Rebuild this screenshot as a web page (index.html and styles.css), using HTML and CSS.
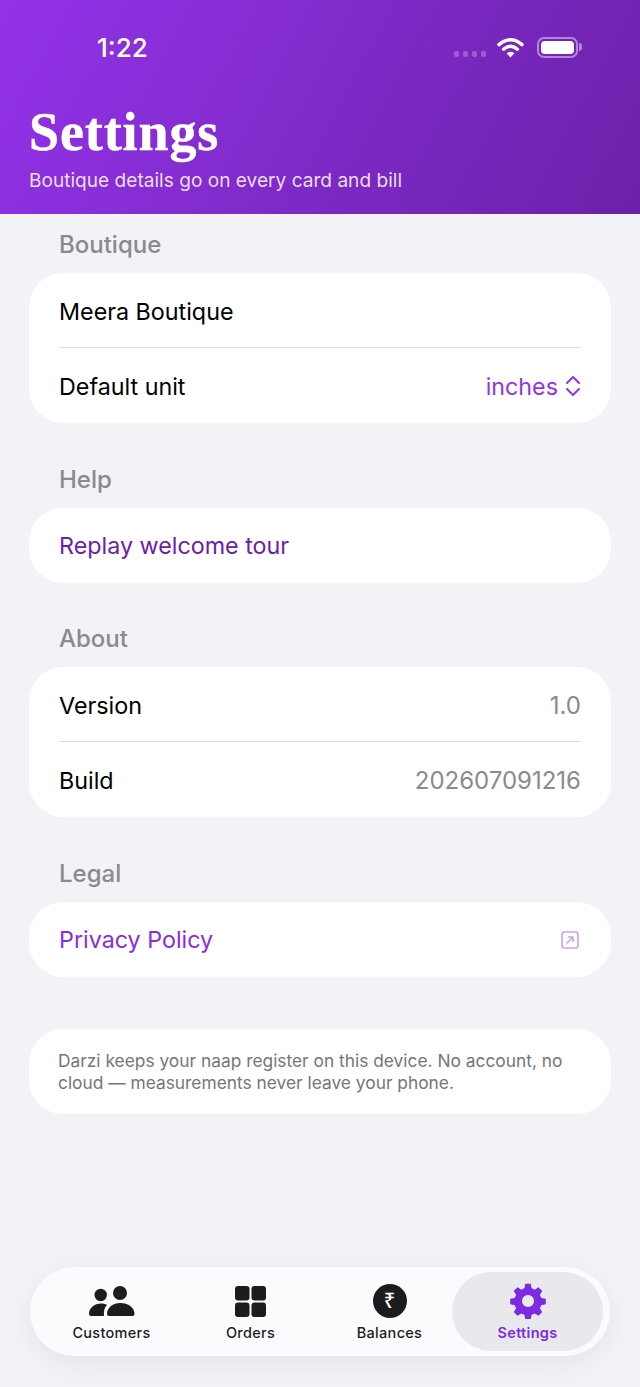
FILE: index.html
```html
<!DOCTYPE html>
<html lang="en">
<head>
    <meta charset="UTF-8">
    <meta name="viewport" content="width=device-width, initial-scale=1.0">
    <title>Settings</title>
    <link rel="stylesheet" href="styles.css">
</head>
<body>
    <div class="app">
        <header class="hero">
            <div class="status-bar">
                <span class="clock">1:22</span>
                <div class="status-icons">
                    <div class="signal"><i></i><i></i><i></i><i></i></div>
                    <svg class="wifi" width="27" height="21" viewBox="0 0 27 21">
                        <path d="M13.5 20.5 L9.6 16.2 Q13.5 13.4 17.4 16.2 Z" fill="#fff"/>
                        <path d="M2 7.6 Q13.5 -2.2 25 7.6" fill="none" stroke="#fff" stroke-width="3.4" stroke-linecap="round"/>
                        <path d="M6.6 12.2 Q13.5 6.2 20.4 12.2" fill="none" stroke="#fff" stroke-width="3.4" stroke-linecap="round"/>
                    </svg>
                    <div class="battery"><div class="battery-fill"></div></div>
                    <div class="battery-cap"></div>
                </div>
            </div>
            <h1>Settings</h1>
            <p class="subtitle">Boutique details go on every card and bill</p>
        </header>

        <main class="content">
            <h2 class="section-label first">Boutique</h2>
            <section class="card">
                <div class="row"><span>Meera Boutique</span></div>
                <div class="row">
                    <span>Default unit</span>
                    <span class="unit">inches
                        <svg width="16" height="22" viewBox="0 0 16 22" fill="none" stroke="#9333ea" stroke-width="2" stroke-linecap="round" stroke-linejoin="round">
                            <path d="M2 8 L8 2 L14 8"/>
                            <path d="M2 14 L8 20 L14 14"/>
                        </svg>
                    </span>
                </div>
            </section>

            <h2 class="section-label">Help</h2>
            <section class="card">
                <div class="row link-dark"><span>Replay welcome tour</span></div>
            </section>

            <h2 class="section-label">About</h2>
            <section class="card">
                <div class="row"><span>Version</span><span class="muted">1.0</span></div>
                <div class="row"><span>Build</span><span class="muted">202607091216</span></div>
            </section>

            <h2 class="section-label">Legal</h2>
            <section class="card">
                <div class="row link"><span>Privacy Policy</span>
                    <svg class="external" width="18" height="18" viewBox="0 0 18 18" fill="none" stroke="#c9a3ef" stroke-width="1.6" stroke-linecap="round" stroke-linejoin="round">
                        <rect x="1" y="1" width="16" height="16" rx="2.5"/>
                        <path d="M6 12 L12 6 M7.5 6 H12 V10.5"/>
                    </svg>
                </div>
            </section>

            <section class="card note">
                Darzi keeps your naap register on this device. No account, no cloud — measurements never leave your phone.
            </section>
        </main>

        <nav class="tabbar">
            <div class="tab">
                <div class="tab-icon">
                    <svg width="46" height="30" viewBox="0 0 46 30" fill="#1c1c1e">
                        <circle cx="11.7" cy="9" r="6.2"/>
                        <circle cx="31" cy="7" r="7"/>
                        <path d="M0 28 C0 22 5.5 17.5 12 17.5 C14.5 17.5 16.5 18 18 19 C15.5 21.5 14.5 25 15 30 H2 Q0 30 0 28 Z"/>
                        <path d="M18 28 C18 21.5 24 17 31.5 17 C39 17 45.5 21.5 45.5 28 Q45.5 30 43.5 30 H20 Q18 30 18 28 Z"/>
                    </svg>
                </div>
                <span>Customers</span>
            </div>
            <div class="tab">
                <div class="tab-icon">
                    <svg width="31" height="31" viewBox="0 0 31 31" fill="#1c1c1e">
                        <rect x="0" y="0" width="14.5" height="14.5" rx="3"/>
                        <rect x="16.5" y="0" width="14.5" height="14.5" rx="3"/>
                        <rect x="0" y="16.5" width="14.5" height="14.5" rx="3"/>
                        <rect x="16.5" y="16.5" width="14.5" height="14.5" rx="3"/>
                    </svg>
                </div>
                <span>Orders</span>
            </div>
            <div class="tab">
                <div class="tab-icon"><div class="rupee">₹</div></div>
                <span>Balances</span>
            </div>
            <div class="tab active">
                <div class="tab-icon">
                    <svg width="36" height="36" viewBox="0 0 24 24" fill="#7c2be0">
                        <path fill-rule="evenodd" d="M10.2 0.5 h3.6 l0.6 3 q1.1 0.35 2 0.95 l2.6 -1.6 l2.5 2.5 l-1.6 2.6 q0.6 0.95 0.95 2 l3 0.6 v3.6 l-3 0.6 q-0.35 1.1 -0.95 2 l1.6 2.6 l-2.5 2.5 l-2.6 -1.6 q-0.95 0.6 -2 0.95 l-0.6 3 h-3.6 l-0.6 -3 q-1.1 -0.35 -2 -0.95 l-2.6 1.6 l-2.5 -2.5 l1.6 -2.6 q-0.6 -0.95 -0.95 -2 l-3 -0.6 v-3.6 l3 -0.6 q0.35 -1.1 0.95 -2 l-1.6 -2.6 l2.5 -2.5 l2.6 1.6 q0.95 -0.6 2 -0.95 Z M12 8 a4 4 0 1 0 0.01 0 Z"/>
                    </svg>
                </div>
                <span>Settings</span>
            </div>
        </nav>
    </div>
</body>
</html>
```

FILE: styles.css
```css
* {
    box-sizing: border-box;
}

body {
    margin: 0;
    background-color: #f2f2f7;
    color: #000;
    font-family: Inter, "Noto Sans", sans-serif;
}

.app {
    display: flex;
    flex-direction: column;
    height: 1387px;
    overflow: hidden;
}

/* Purple header */
.hero {
    height: 214px;
    padding: 0 29px;
    background: linear-gradient(118deg, #9333ea 0%, #6b21a8 100%);
    color: #fff;
}

.status-bar {
    display: flex;
    justify-content: space-between;
    align-items: center;
    height: 94px;
    padding-left: 68px;
    padding-right: 29px;
}

.clock {
    font-size: 26px;
    font-weight: 500;
}

.status-icons {
    display: flex;
    align-items: center;
}

.signal {
    display: flex;
    gap: 4px;
    margin-top: 14px;
    margin-right: 11px;
}

.signal i {
    width: 5px;
    height: 6px;
    border-radius: 2px;
    background-color: rgba(255, 255, 255, 0.25);
}

.wifi {
    margin-right: 13px;
}

.battery {
    width: 41px;
    height: 21px;
    padding: 2px;
    border: 2px solid rgba(255, 255, 255, 0.45);
    border-radius: 7px;
}

.battery-fill {
    height: 100%;
    border-radius: 4px;
    background-color: #fff;
}

.battery-cap {
    width: 3px;
    height: 8px;
    margin-left: 1px;
    border-radius: 0 3px 3px 0;
    background-color: rgba(255, 255, 255, 0.45);
}

h1 {
    margin: 10px 0 0;
    font-family: "Liberation Serif", serif;
    font-size: 54px;
    font-weight: 700;
    letter-spacing: 0.9px;
    line-height: 56px;
    -webkit-text-stroke: 0.4px #fff;
}

.subtitle {
    margin: 8px 0 0;
    color: rgba(255, 255, 255, 0.85);
    font-size: 19.1px;
    line-height: 24px;
}

/* Cards */
.content {
    flex: 1;
    padding: 0 29px;
}

.section-label {
    margin: 41.66px 0 14px 30px;
    color: #8a8a8e;
    font-size: 24px;
    font-weight: 500;
    line-height: 29px;
}

.section-label.first {
    margin-top: 16px;
}

.card {
    overflow: hidden;
    border-radius: 34px;
    background-color: #fff;
}

.row {
    display: flex;
    justify-content: space-between;
    align-items: center;
    height: 75px;
    margin: 0 30px;
    padding-top: 1px;
    font-size: 23.3px;
}

.row + .row {
    height: 76px;
    margin-top: -1px;
    border-top: 1px solid #e2e2e6;
}

.unit {
    display: flex;
    align-items: center;
    gap: 7px;
    color: #9333ea;
}

.muted {
    color: #8a8a8e;
    font-size: 24px;
}

.link {
    color: #8a2be2;
}

.link-dark {
    color: #6b21a8;
}

.external {
    margin-right: 2px;
}

.note {
    margin-top: 52px;
    padding: 21px 29px 20px;
    color: #76767a;
    font-size: 17.35px;
    line-height: 22px;
}

/* Bottom tab bar */
.tabbar {
    display: flex;
    align-items: stretch;
    height: 89px;
    margin: 0 30px 31px;
    padding: 5px 13px 5px 12px;
    border-radius: 45px;
    background-color: #fbfbfe;
    box-shadow: 0 8px 30px rgba(0, 0, 0, 0.06);
}

.tab {
    flex: 0 0 139px;
    display: flex;
    flex-direction: column;
    align-items: center;
    justify-content: flex-end;
    gap: 5px;
    padding-bottom: 9px;
    border-radius: 40px;
    color: #1c1c1e;
    font-size: 14.5px;
    font-weight: 500;
    letter-spacing: 0.3px;
    line-height: 18px;
}

.tab-icon {
    display: flex;
    justify-content: center;
    align-items: center;
    height: 36px;
}

.tab.active {
    flex-basis: 151px;
    margin: 0 -5px 0 -7px;
    background-color: #e9e9ed;
    color: #7c2be0;
    font-weight: 600;
}

.rupee {
    display: flex;
    justify-content: center;
    align-items: center;
    width: 34px;
    height: 34px;
    border-radius: 50%;
    background-color: #1c1c1e;
    color: #fff;
    font-family: "Noto Sans", sans-serif;
    font-size: 20px;
}
```
